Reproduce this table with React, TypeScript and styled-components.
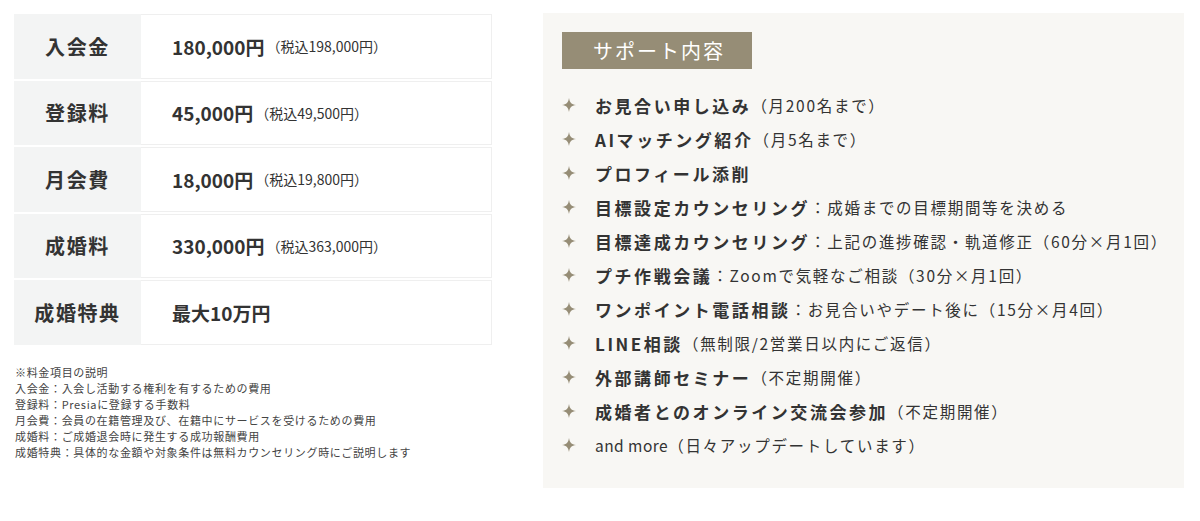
import * as React from 'react'
import styled, { createGlobalStyle } from 'styled-components'

const GlobalStyle = createGlobalStyle`
  body {
    margin: 0;
    background: #ffffff;
    font-family: "Noto Sans CJK JP", "Noto Sans", sans-serif;
    color: #333333;
  }
`

interface Fee {
  label: string
  price: string
  tax?: string
}

const fees: Fee[] = [
  { label: '入会金', price: '180,000円', tax: '（税込198,000円）' },
  { label: '登録料', price: '45,000円', tax: '（税込49,500円）' },
  { label: '月会費', price: '18,000円', tax: '（税込19,800円）' },
  { label: '成婚料', price: '330,000円', tax: '（税込363,000円）' },
  { label: '成婚特典', price: '最大10万円' }
]

const notes = [
  '※料金項目の説明',
  '入会金：入会し活動する権利を有するための費用',
  '登録料：Presiaに登録する手数料',
  '月会費：会員の在籍管理及び、在籍中にサービスを受けるための費用',
  '成婚料：ご成婚退会時に発生する成功報酬費用',
  '成婚特典：具体的な金額や対象条件は無料カウンセリング時にご説明します'
]

interface Support {
  title: string
  detail?: string
  light?: boolean
}

const supports: Support[] = [
  { title: 'お見合い申し込み', detail: '（月200名まで）' },
  { title: 'AIマッチング紹介', detail: '（月5名まで）' },
  { title: 'プロフィール添削' },
  { title: '目標設定カウンセリング', detail: '：成婚までの目標期間等を決める' },
  { title: '目標達成カウンセリング', detail: '：上記の進捗確認・軌道修正（60分×月1回）' },
  { title: 'プチ作戦会議', detail: '：Zoomで気軽なご相談（30分×月1回）' },
  { title: 'ワンポイント電話相談', detail: '：お見合いやデート後に（15分×月4回）' },
  { title: 'LINE相談', detail: '（無制限/2営業日以内にご返信）' },
  { title: '外部講師セミナー', detail: '（不定期開催）' },
  { title: '成婚者とのオンライン交流会参加', detail: '（不定期開催）' },
  { title: 'and more', detail: '（日々アップデートしています）', light: true }
]

const Sparkle = () => (
  <svg width="14" height="14" viewBox="0 0 20 20">
    <path
      d="M10 0 C11 6.5 13.5 9 20 10 C13.5 11 11 13.5 10 20 C9 13.5 6.5 11 0 10 C6.5 9 9 6.5 10 0 Z"
      fill="#968d76"
    />
  </svg>
)

export default function App() {
  return (
    <>
      <GlobalStyle />
      <Page>
        <FeeColumn>
          <FeeTable>
            {fees.map(fee => (
              <FeeRow key={fee.label}>
                <FeeLabel>{fee.label}</FeeLabel>
                <FeeValue>
                  <Price>{fee.price}</Price>
                  {fee.tax && <Tax>{fee.tax}</Tax>}
                </FeeValue>
              </FeeRow>
            ))}
          </FeeTable>
          <Notes>
            {notes.map(n => (
              <NoteLine key={n}>{n}</NoteLine>
            ))}
          </Notes>
        </FeeColumn>
        <SupportPanel>
          <SupportHeading>サポート内容</SupportHeading>
          <SupportList>
            {supports.map(s => (
              <SupportItem key={s.title}>
                <Bullet>
                  <Sparkle />
                </Bullet>
                <ItemTitle light={s.light}>{s.title}</ItemTitle>
                {s.detail && <ItemDetail>{s.detail}</ItemDetail>}
              </SupportItem>
            ))}
          </SupportList>
        </SupportPanel>
      </Page>
    </>
  )
}

const Page = styled.div`
  display: flex;
  align-items: flex-start;
  gap: 51px;
  padding: 13px 16px 0 14px;
`

const FeeColumn = styled.div`
  width: 478px;
  flex-shrink: 0;
  padding-top: 1px;
`

const FeeTable = styled.div`
  display: grid;
  grid-auto-rows: 64.5px;
  row-gap: 2px;
`

const FeeRow = styled.div`
  display: grid;
  grid-template-columns: 127px 1fr;
`

const FeeLabel = styled.div`
  display: flex;
  align-items: center;
  justify-content: center;
  background: #f3f4f4;
  font-size: 20px;
  font-weight: 700;
  letter-spacing: 0.08em;
  color: #333333;
`

const FeeValue = styled.div`
  display: flex;
  align-items: center;
  padding-left: 31px;
  border: 1px solid #efefef;
  border-left: none;
`

const Price = styled.span`
  font-size: 19px;
  font-weight: 700;
  color: #333333;
`

const Tax = styled.span`
  font-size: 14px;
  margin-left: 2px;
  color: #333333;
`

const Notes = styled.div`
  margin-top: 19px;
  padding-left: 1px;
`

const NoteLine = styled.div`
  font-size: 11px;
  line-height: 16px;
  letter-spacing: 0.06em;
  color: #444444;
`

const SupportPanel = styled.div`
  flex: 1;
  min-width: 0;
  min-height: 475px;
  box-sizing: border-box;
  background: #f8f7f4;
  padding: 19px 19px 26px;
`

const SupportHeading = styled.div`
  width: 190px;
  height: 37px;
  display: flex;
  align-items: center;
  justify-content: center;
  padding-left: 4px;
  box-sizing: border-box;
  background: #968d76;
  color: #ffffff;
  font-size: 20px;
  letter-spacing: 0.1em;
`

const SupportList = styled.ul`
  list-style: none;
  margin: 19px 0 0;
  padding: 0;
`

const SupportItem = styled.li`
  display: flex;
  align-items: center;
  height: 34px;
  white-space: nowrap;
  color: #333333;
`

const Bullet = styled.span`
  width: 14px;
  flex-shrink: 0;
  display: flex;
  justify-content: center;
  margin-right: 19px;
`

const ItemTitle = styled.span<{ light?: boolean }>`
  font-size: ${p => (p.light ? '15.5px' : '17px')};
  font-weight: ${p => (p.light ? 400 : 700)};
  letter-spacing: ${p => (p.light ? '0.03em' : '0.15em')};
`

const ItemDetail = styled.span`
  font-size: 15.5px;
  font-weight: 400;
  letter-spacing: 0.11em;
`
